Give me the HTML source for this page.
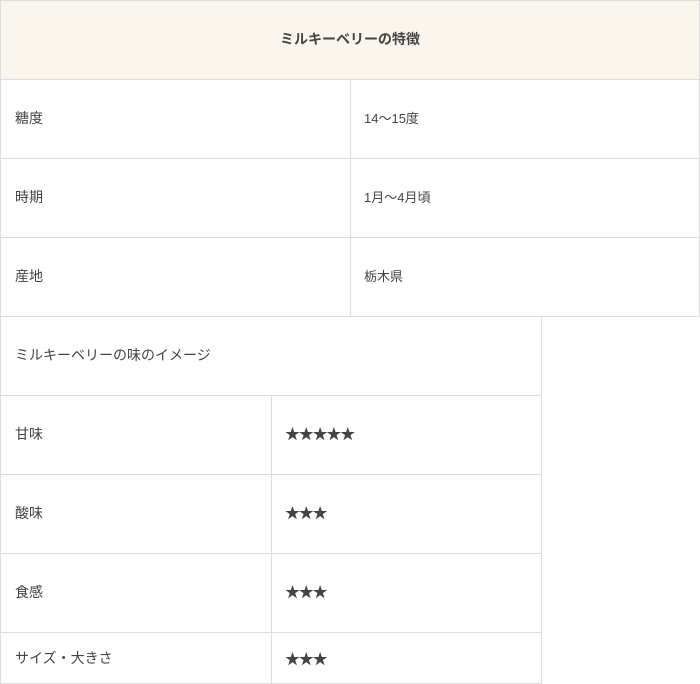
<!DOCTYPE html>
<html><head><meta charset="utf-8"><style>
body{margin:0;width:700px;height:684px;overflow:hidden;background:#fff;font-family:"Liberation Sans","Noto Sans CJK JP",sans-serif;font-size:14px;color:#444}
.c{position:absolute;box-sizing:border-box;border:1px solid #ddd;display:flex;align-items:center;padding-left:14px;padding-bottom:3px}
.h{background:#faf6ee;justify-content:center;padding:0 0 3px 0;font-weight:bold}
.v{font-size:13px;padding-left:13px}
.s{font-size:15px;letter-spacing:-1.2px;color:#444}
</style></head><body>
<div class="c h" style="left:0;top:0;width:700px;height:80px">ミルキーベリーの特徴</div>
<div class="c" style="left:0;top:79px;width:351px;height:80px">糖度</div>
<div class="c v" style="left:350px;top:79px;width:350px;height:80px">14〜15度</div>
<div class="c" style="left:0;top:158px;width:351px;height:80px">時期</div>
<div class="c v" style="left:350px;top:158px;width:350px;height:80px">1月〜4月頃</div>
<div class="c" style="left:0;top:237px;width:351px;height:80px">産地</div>
<div class="c v" style="left:350px;top:237px;width:350px;height:80px">栃木県</div>
<div class="c" style="left:0;top:316px;width:542px;height:80px">ミルキーベリーの味のイメージ</div>
<div class="c" style="left:0;top:395px;width:272px;height:80px">甘味</div>
<div class="c s" style="left:271px;top:395px;width:271px;height:80px;padding-left:13px">★★★★★</div>
<div class="c" style="left:0;top:474px;width:272px;height:80px">酸味</div>
<div class="c s" style="left:271px;top:474px;width:271px;height:80px;padding-left:13px">★★★</div>
<div class="c" style="left:0;top:553px;width:272px;height:80px">食感</div>
<div class="c s" style="left:271px;top:553px;width:271px;height:80px;padding-left:13px">★★★</div>
<div class="c" style="left:0;top:632px;width:272px;height:52px;padding-bottom:0">サイズ・大きさ</div>
<div class="c s" style="left:271px;top:632px;width:271px;height:52px;padding-left:13px;padding-bottom:0">★★★</div>
</body></html>
